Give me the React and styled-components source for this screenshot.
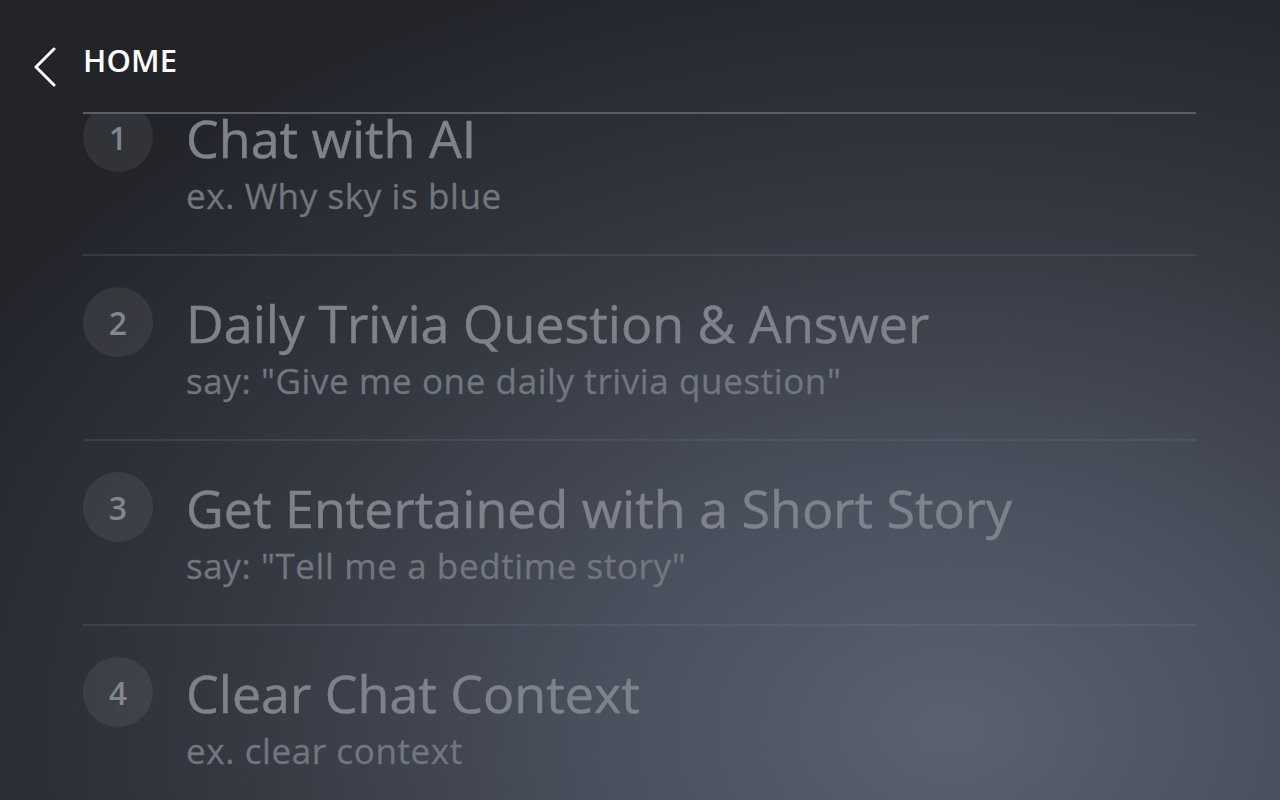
import React, { useEffect, useRef } from "react";
import styled, { createGlobalStyle } from "styled-components";

const Global = createGlobalStyle`
  html, body { margin: 0; padding: 0; }
  body { font-family: "Open Sans", "Noto Sans", sans-serif; }
`;

const Page = styled.div`
  width: 1280px;
  height: 800px;
  overflow: hidden;
  display: flex;
  flex-direction: column;
  background:
    radial-gradient(ellipse 1150px 820px at 950px 730px, #5a6170 0%, #4a505d 30%, #33373f 65%, #22242a 100%);
`;

const Header = styled.header`
  height: 112px;
  flex: none;
  display: flex;
  align-items: center;
  padding: 7px 0 0 33px;
  gap: 26px;
  box-sizing: border-box;
`;

const BackButton = styled.button`
  background: none;
  border: 0;
  padding: 0;
  margin-top: 15px;
  display: flex;
  align-items: center;
  cursor: pointer;
`;

const HeaderTitle = styled.h1`
  margin: 0;
  font-size: 31px;
  font-weight: 600;
  color: #ffffff;
  letter-spacing: 0.2px;
`;

const Rule = styled.div`
  flex: none;
  height: 2px;
  margin: 0 84px 0 83px;
  background: #5b5e66;
`;

const List = styled.ul`
  list-style: none;
  margin: 0;
  padding: 0 84px 0 83px;
  flex: 1;
  overflow: hidden;
`;

const Row = styled.li`
  height: 185px;
  box-sizing: border-box;
  padding-top: 31px;
  display: flex;
  gap: 33px;
  border-bottom: 2px solid rgba(120, 128, 145, 0.22);
  &:last-child { border-bottom: 0; }
`;

const Badge = styled.div`
  flex: none;
  width: 70px;
  height: 70px;
  border-radius: 50%;
  background: rgba(255, 255, 255, 0.07);
  color: #82868e;
  font-size: 32px;
  font-weight: 600;
  display: flex;
  align-items: center;
  justify-content: center;
`;

const Texts = styled.div`
  display: flex;
  flex-direction: column;
  padding-top: 6px;
`;

const Title = styled.div`
  font-size: 52px;
  line-height: 60px;
  color: #7e828b;
  font-weight: 500;
  -webkit-text-stroke: 0.5px #7e828b;
  white-space: nowrap;
`;

const Subtitle = styled.div`
  margin-top: 8px;
  font-size: 35px;
  line-height: 40px;
  letter-spacing: 0.6px;
  color: #72767f;
  -webkit-text-stroke: 0.3px #72767f;
  white-space: nowrap;
`;

const items = [
  { n: 1, title: "Chat with AI", sub: "ex. Why sky is blue" },
  { n: 2, title: "Daily Trivia Question & Answer", sub: 'say: "Give me one daily trivia question"' },
  { n: 3, title: "Get Entertained with a Short Story", sub: 'say: "Tell me a bedtime story"' },
  { n: 4, title: "Clear Chat Context", sub: "ex. clear context" },
];

export default function App() {
  const listRef = useRef(null);
  useEffect(() => {
    if (listRef.current) listRef.current.scrollTop = 43;
  }, []);
  return (
    <>
      <Global />
      <Page>
        <Header>
          <BackButton aria-label="Back">
            <svg width="24" height="40" viewBox="0 0 24 40" fill="none">
              <path d="M21 2 L3 20 L21 38" stroke="#ffffff" strokeWidth="3" strokeLinecap="round" strokeLinejoin="round" />
            </svg>
          </BackButton>
          <HeaderTitle>HOME</HeaderTitle>
        </Header>
        <Rule />
        <List ref={listRef}>
          {items.map((it) => (
            <Row key={it.n}>
              <Badge>{it.n}</Badge>
              <Texts>
                <Title>{it.title}</Title>
                <Subtitle>{it.sub}</Subtitle>
              </Texts>
            </Row>
          ))}
        </List>
      </Page>
    </>
  );
}
